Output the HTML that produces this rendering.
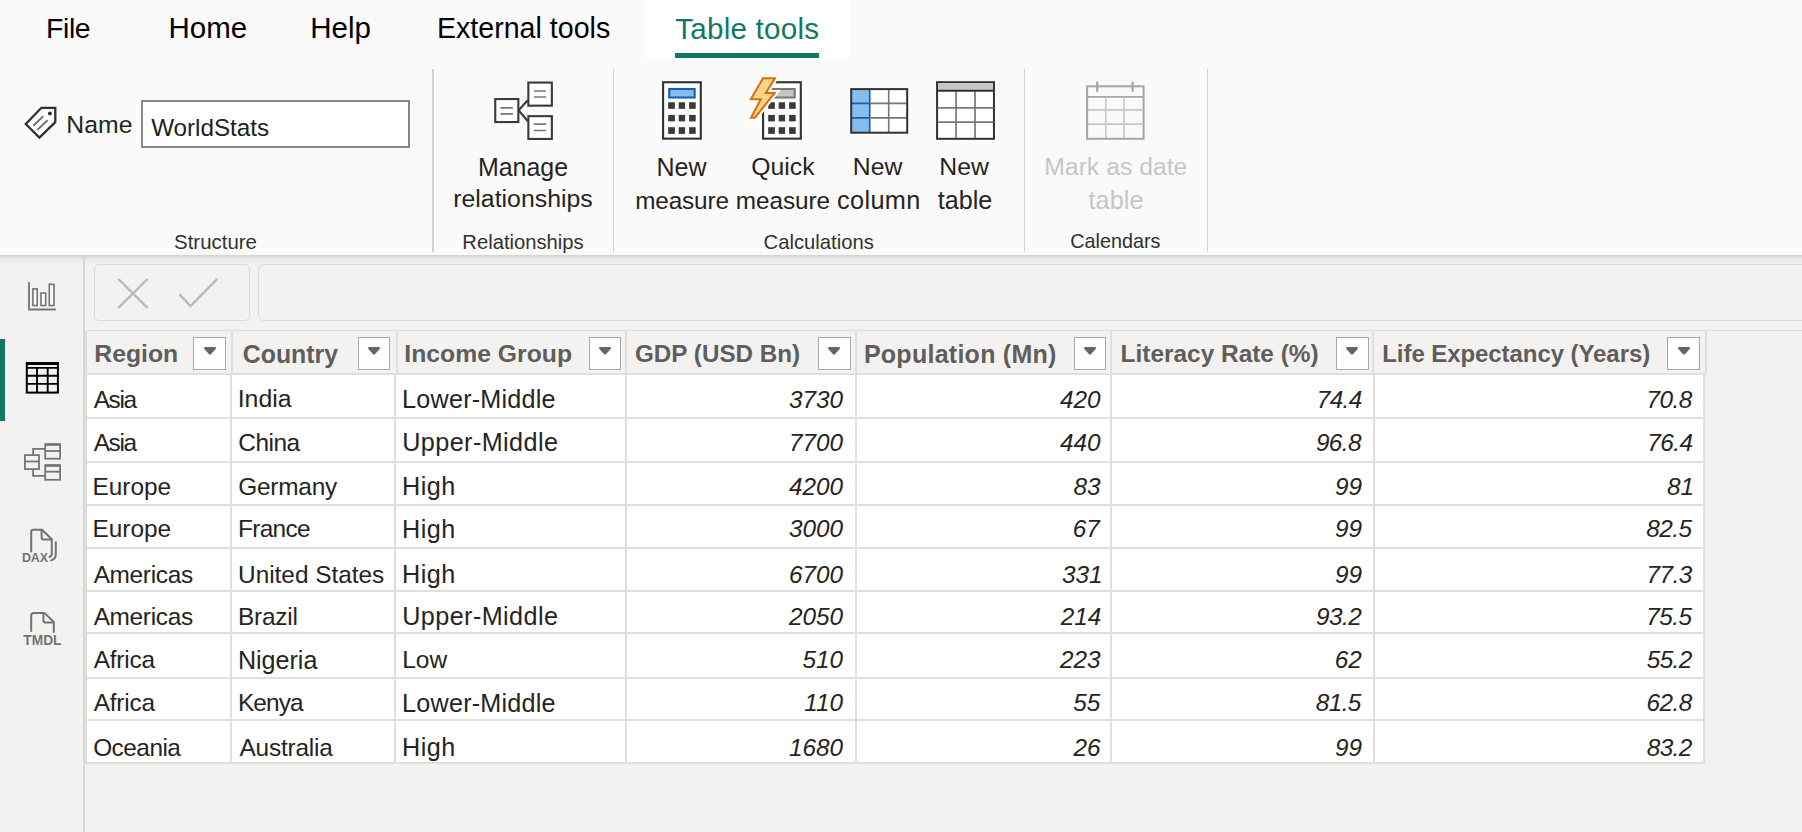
<!DOCTYPE html>
<html><head><meta charset="utf-8"><style>
html,body{margin:0;padding:0;}
body{width:1802px;height:832px;overflow:hidden;background:#f3f2f1;position:relative;font-family:"Liberation Sans",sans-serif;}
.t{position:absolute;white-space:nowrap;line-height:1;}
.r{position:absolute;}
svg.r{overflow:visible}
</style></head><body>
<div class="r" style="left:0px;top:0px;width:1802px;height:255px;background:#fafafa"></div>
<div class="r" style="left:0px;top:255px;width:1802px;height:9px;background:linear-gradient(#d3d2d0,#e9e8e6 40%,#f3f2f1)"></div>
<div class="r" style="left:645px;top:0px;width:204px;height:57.5px;background:#ffffff"></div>
<div class="r" style="left:675px;top:53px;width:144px;height:4.5px;background:#117865"></div>
<div class="t" style="left:46.06px;top:14.26px;font-size:28.4px;color:#000000;letter-spacing:-0.39px">File</div>
<div class="t" style="left:168.57px;top:13.33px;font-size:29.5px;color:#000000;letter-spacing:-0.00px">Home</div>
<div class="t" style="left:310.27px;top:13.33px;font-size:29.5px;color:#000000;letter-spacing:-0.00px">Help</div>
<div class="t" style="left:436.94px;top:14.28px;font-size:28.61px;color:#000000;letter-spacing:-0.00px">External tools</div>
<div class="t" style="left:675.33px;top:13.64px;font-size:29.6px;color:#117865;letter-spacing:0.22px">Table tools</div>
<div class="r" style="left:432.25px;top:69px;width:1.5px;height:182.5px;background:#d6d4d2"></div>
<div class="r" style="left:612.85px;top:69px;width:1.5px;height:182.5px;background:#d6d4d2"></div>
<div class="r" style="left:1023.95px;top:69px;width:1.5px;height:182.5px;background:#d6d4d2"></div>
<div class="r" style="left:1206.65px;top:69px;width:1.5px;height:182.5px;background:#d6d4d2"></div>
<div class="r" style="left:141.3px;top:99.5px;width:268.7px;height:48.80000000000001px;background:#fff;border:2px solid #8a8886;box-sizing:border-box"></div>
<div class="t" style="left:66.36px;top:113.22px;font-size:24.78px;color:#252423;letter-spacing:-0.00px">Name</div>
<div class="t" style="left:151.18px;top:116.13px;font-size:24.3px;color:#201f1e;letter-spacing:-0.05px">WorldStats</div>
<div class="t" style="left:477.94px;top:155.38px;font-size:24.95px;color:#252423;letter-spacing:-0.00px">Manage</div>
<div class="t" style="left:453.29px;top:187.27px;font-size:24.84px;color:#252423;letter-spacing:0.00px">relationships</div>
<div class="t" style="left:656.44px;top:155.04px;font-size:25.0px;color:#252423">New</div>
<div class="t" style="left:635.26px;top:188.73px;font-size:24.3px;color:#252423;letter-spacing:-0.14px">measure</div>
<div class="t" style="left:751.33px;top:155.27px;font-size:24.73px;color:#252423;letter-spacing:-0.00px">Quick</div>
<div class="t" style="left:735.86px;top:188.73px;font-size:24.3px;color:#252423;letter-spacing:-0.08px">measure</div>
<div class="t" style="left:852.75px;top:155.22px;font-size:24.79px;color:#252423;letter-spacing:0.00px">New</div>
<div class="t" style="left:837.12px;top:187.88px;font-size:25.3px;color:#252423;letter-spacing:0.33px">column</div>
<div class="t" style="left:939.35px;top:155.22px;font-size:24.79px;color:#252423;letter-spacing:0.00px">New</div>
<div class="t" style="left:937.82px;top:188.04px;font-size:25.12px;color:#252423;letter-spacing:-0.00px">table</div>
<div class="t" style="left:1044.26px;top:155.24px;font-size:24.76px;color:#c8c6c4;letter-spacing:-0.00px">Mark as date</div>
<div class="t" style="left:1088.52px;top:187.88px;font-size:25.3px;color:#c8c6c4;letter-spacing:0.05px">table</div>
<div class="t" style="left:174.08px;top:231.61px;font-size:20.42px;color:#323130;letter-spacing:-0.00px">Structure</div>
<div class="t" style="left:462.33px;top:231.58px;font-size:20.22px;color:#323130;letter-spacing:0.00px">Relationships</div>
<div class="t" style="left:763.59px;top:231.86px;font-size:20.25px;color:#323130;letter-spacing:0.00px">Calculations</div>
<div class="t" style="left:1070.31px;top:232.05px;font-size:19.79px;color:#323130;letter-spacing:-0.00px">Calendars</div>
<div class="r" style="left:83.3px;top:255px;width:1.6000000000000085px;height:577px;background:#dad8d6"></div>
<div class="r" style="left:0px;top:338.5px;width:5px;height:82.5px;background:#117865"></div>
<div class="r" style="left:93.6px;top:264.4px;width:156.8px;height:57.0px;border:1.8px solid #dddbd9;border-radius:5px;box-sizing:border-box"></div>
<div class="r" style="left:258px;top:264.4px;width:1572px;height:57.0px;border:1.8px solid #dddbd9;border-radius:5px;box-sizing:border-box"></div>
<div class="r" style="left:85px;top:329.8px;width:1717px;height:1.5px;background:#e1dfdd"></div>
<div class="r" style="left:86px;top:375px;width:1618px;height:388px;background:#ffffff"></div>
<div class="r" style="left:85px;top:331px;width:2px;height:43px;background:#e1dfdd"></div>
<div class="r" style="left:230.5px;top:331px;width:2.0px;height:43px;background:#e1dfdd"></div>
<div class="r" style="left:395.5px;top:331px;width:2.0px;height:43px;background:#e1dfdd"></div>
<div class="r" style="left:624.5px;top:331px;width:2.0px;height:43px;background:#e1dfdd"></div>
<div class="r" style="left:854.5px;top:331px;width:2.0px;height:43px;background:#e1dfdd"></div>
<div class="r" style="left:1109.7px;top:331px;width:2.0px;height:43px;background:#e1dfdd"></div>
<div class="r" style="left:1372px;top:331px;width:2px;height:43px;background:#e1dfdd"></div>
<div class="r" style="left:1704.5px;top:331px;width:2.0px;height:43px;background:#e1dfdd"></div>
<div class="r" style="left:85px;top:374px;width:2px;height:390px;background:#e1dfdd"></div>
<div class="r" style="left:230px;top:374px;width:2px;height:390px;background:#e1dfdd"></div>
<div class="r" style="left:394px;top:374px;width:2px;height:390px;background:#e1dfdd"></div>
<div class="r" style="left:625px;top:374px;width:2px;height:390px;background:#e1dfdd"></div>
<div class="r" style="left:855px;top:374px;width:2px;height:390px;background:#e1dfdd"></div>
<div class="r" style="left:1110.4px;top:374px;width:2.0px;height:390px;background:#e1dfdd"></div>
<div class="r" style="left:1372.5px;top:374px;width:2.0px;height:390px;background:#e1dfdd"></div>
<div class="r" style="left:1703px;top:374px;width:2px;height:390px;background:#e1dfdd"></div>
<div class="r" style="left:86px;top:373px;width:1619.5px;height:2px;background:#e1dfdd"></div>
<div class="r" style="left:86px;top:417.1px;width:1618px;height:2.0px;background:#e1dfdd"></div>
<div class="r" style="left:86px;top:460.9px;width:1618px;height:2.0px;background:#e1dfdd"></div>
<div class="r" style="left:86px;top:504.2px;width:1618px;height:2.0px;background:#e1dfdd"></div>
<div class="r" style="left:86px;top:547.3px;width:1618px;height:2.0px;background:#e1dfdd"></div>
<div class="r" style="left:86px;top:590.1px;width:1618px;height:2.0px;background:#e1dfdd"></div>
<div class="r" style="left:86px;top:632.4px;width:1618px;height:2.0px;background:#e1dfdd"></div>
<div class="r" style="left:86px;top:676.5px;width:1618px;height:2.0px;background:#e1dfdd"></div>
<div class="r" style="left:86px;top:719.1px;width:1618px;height:2.0px;background:#e1dfdd"></div>
<div class="r" style="left:86px;top:762px;width:1618px;height:2px;background:#e1dfdd"></div>
<div class="r" style="left:193px;top:337.1px;width:33px;height:32.599999999999966px;background:#fff;border:1.9px solid #a8a8a8;box-sizing:border-box"></div>
<svg class="r" style="left:202.5px;top:346px" width="14" height="10" viewBox="0 0 14 10"><path d="M2.3 2.2 L11.7 2.2 L7 7.3 Z" fill="#666666" stroke="#666666" stroke-width="2.6" stroke-linejoin="round"/></svg>
<div class="r" style="left:358px;top:337.1px;width:32px;height:32.599999999999966px;background:#fff;border:1.9px solid #a8a8a8;box-sizing:border-box"></div>
<svg class="r" style="left:367.0px;top:346px" width="14" height="10" viewBox="0 0 14 10"><path d="M2.3 2.2 L11.7 2.2 L7 7.3 Z" fill="#666666" stroke="#666666" stroke-width="2.6" stroke-linejoin="round"/></svg>
<div class="r" style="left:589px;top:337.1px;width:32px;height:32.599999999999966px;background:#fff;border:1.9px solid #a8a8a8;box-sizing:border-box"></div>
<svg class="r" style="left:598.0px;top:346px" width="14" height="10" viewBox="0 0 14 10"><path d="M2.3 2.2 L11.7 2.2 L7 7.3 Z" fill="#666666" stroke="#666666" stroke-width="2.6" stroke-linejoin="round"/></svg>
<div class="r" style="left:818px;top:337.1px;width:32.5px;height:32.599999999999966px;background:#fff;border:1.9px solid #a8a8a8;box-sizing:border-box"></div>
<svg class="r" style="left:827.25px;top:346px" width="14" height="10" viewBox="0 0 14 10"><path d="M2.3 2.2 L11.7 2.2 L7 7.3 Z" fill="#666666" stroke="#666666" stroke-width="2.6" stroke-linejoin="round"/></svg>
<div class="r" style="left:1074px;top:337.1px;width:32px;height:32.599999999999966px;background:#fff;border:1.9px solid #a8a8a8;box-sizing:border-box"></div>
<svg class="r" style="left:1083.0px;top:346px" width="14" height="10" viewBox="0 0 14 10"><path d="M2.3 2.2 L11.7 2.2 L7 7.3 Z" fill="#666666" stroke="#666666" stroke-width="2.6" stroke-linejoin="round"/></svg>
<div class="r" style="left:1336px;top:337.1px;width:32.5px;height:32.599999999999966px;background:#fff;border:1.9px solid #a8a8a8;box-sizing:border-box"></div>
<svg class="r" style="left:1345.25px;top:346px" width="14" height="10" viewBox="0 0 14 10"><path d="M2.3 2.2 L11.7 2.2 L7 7.3 Z" fill="#666666" stroke="#666666" stroke-width="2.6" stroke-linejoin="round"/></svg>
<div class="r" style="left:1667px;top:337.1px;width:33px;height:32.599999999999966px;background:#fff;border:1.9px solid #a8a8a8;box-sizing:border-box"></div>
<svg class="r" style="left:1676.5px;top:346px" width="14" height="10" viewBox="0 0 14 10"><path d="M2.3 2.2 L11.7 2.2 L7 7.3 Z" fill="#666666" stroke="#666666" stroke-width="2.6" stroke-linejoin="round"/></svg>
<div class="t" style="left:94.33px;top:341.87px;font-size:24.72px;color:#605e5c;letter-spacing:0.00px;font-weight:700">Region</div>
<div class="t" style="left:242.81px;top:341.75px;font-size:24.87px;color:#605e5c;letter-spacing:0.00px;font-weight:700">Country</div>
<div class="t" style="left:404.33px;top:341.86px;font-size:24.74px;color:#605e5c;letter-spacing:-0.00px;font-weight:700">Income Group</div>
<div class="t" style="left:635.03px;top:342.28px;font-size:24.24px;color:#605e5c;letter-spacing:-0.00px;font-weight:700">GDP (USD Bn)</div>
<div class="t" style="left:863.91px;top:341.64px;font-size:25.0px;color:#605e5c;letter-spacing:0.26px;font-weight:700">Population (Mn)</div>
<div class="t" style="left:1120.55px;top:342.12px;font-size:24.43px;color:#605e5c;letter-spacing:-0.00px;font-weight:700">Literacy Rate (%)</div>
<div class="t" style="left:1382.28px;top:342.48px;font-size:24.0px;color:#605e5c;letter-spacing:-0.07px;font-weight:700">Life Expectancy (Years)</div>
<div class="t" style="left:93.64px;top:387.65px;font-size:24.4px;color:#252423;letter-spacing:-1.32px">Asia</div>
<div class="t" style="left:237.70px;top:387.27px;font-size:24.84px;color:#252423;letter-spacing:-0.00px">India</div>
<div class="t" style="left:402.12px;top:386.97px;font-size:25.2px;color:#252423;letter-spacing:0.21px">Lower-Middle</div>
<div class="t" style="left:788.98px;top:387.73px;font-size:24.3px;color:#252423;font-style:italic">3730</div>
<div class="t" style="left:1060.06px;top:387.73px;font-size:24.3px;color:#252423;font-style:italic">420</div>
<div class="t" style="left:1316.70px;top:387.73px;font-size:24.3px;color:#252423;letter-spacing:-0.55px;font-style:italic">74.4</div>
<div class="t" style="left:1646.51px;top:387.73px;font-size:24.3px;color:#252423;letter-spacing:-0.55px;font-style:italic">70.8</div>
<div class="t" style="left:93.64px;top:430.65px;font-size:24.4px;color:#252423;letter-spacing:-1.32px">Asia</div>
<div class="t" style="left:238.28px;top:430.65px;font-size:24.4px;color:#252423;letter-spacing:-0.47px">China</div>
<div class="t" style="left:402.25px;top:429.97px;font-size:25.2px;color:#252423;letter-spacing:0.41px">Upper-Middle</div>
<div class="t" style="left:788.98px;top:430.73px;font-size:24.3px;color:#252423;font-style:italic">7700</div>
<div class="t" style="left:1060.06px;top:430.73px;font-size:24.3px;color:#252423;font-style:italic">440</div>
<div class="t" style="left:1315.91px;top:430.73px;font-size:24.3px;color:#252423;letter-spacing:-0.55px;font-style:italic">96.8</div>
<div class="t" style="left:1647.30px;top:430.73px;font-size:24.3px;color:#252423;letter-spacing:-0.55px;font-style:italic">76.4</div>
<div class="t" style="left:92.59px;top:474.55px;font-size:24.4px;color:#252423;letter-spacing:-0.04px">Europe</div>
<div class="t" style="left:238.28px;top:474.55px;font-size:24.4px;color:#252423;letter-spacing:-0.23px">Germany</div>
<div class="t" style="left:402.12px;top:473.87px;font-size:25.2px;color:#252423;letter-spacing:0.49px">High</div>
<div class="t" style="left:788.98px;top:474.63px;font-size:24.3px;color:#252423;font-style:italic">4200</div>
<div class="t" style="left:1073.61px;top:474.63px;font-size:24.3px;color:#252423;font-style:italic">83</div>
<div class="t" style="left:1334.91px;top:474.63px;font-size:24.3px;color:#252423;font-style:italic">99</div>
<div class="t" style="left:1667.03px;top:474.63px;font-size:24.3px;color:#252423;font-style:italic">81</div>
<div class="t" style="left:92.59px;top:517.35px;font-size:24.4px;color:#252423;letter-spacing:-0.04px">Europe</div>
<div class="t" style="left:237.99px;top:517.35px;font-size:24.4px;color:#252423;letter-spacing:-0.65px">France</div>
<div class="t" style="left:402.12px;top:516.67px;font-size:25.2px;color:#252423;letter-spacing:0.49px">High</div>
<div class="t" style="left:788.98px;top:517.43px;font-size:24.3px;color:#252423;font-style:italic">3000</div>
<div class="t" style="left:1072.64px;top:517.43px;font-size:24.3px;color:#252423;font-style:italic">67</div>
<div class="t" style="left:1334.91px;top:517.43px;font-size:24.3px;color:#252423;font-style:italic">99</div>
<div class="t" style="left:1646.33px;top:517.43px;font-size:24.3px;color:#252423;letter-spacing:-0.55px;font-style:italic">82.5</div>
<div class="t" style="left:93.64px;top:562.65px;font-size:24.4px;color:#252423;letter-spacing:-0.31px">Americas</div>
<div class="t" style="left:238.11px;top:562.65px;font-size:24.4px;color:#252423;letter-spacing:-0.03px">United States</div>
<div class="t" style="left:402.12px;top:561.97px;font-size:25.2px;color:#252423;letter-spacing:0.49px">High</div>
<div class="t" style="left:788.98px;top:562.73px;font-size:24.3px;color:#252423;font-style:italic">6700</div>
<div class="t" style="left:1061.88px;top:562.73px;font-size:24.3px;color:#252423;font-style:italic">331</div>
<div class="t" style="left:1334.91px;top:562.73px;font-size:24.3px;color:#252423;font-style:italic">99</div>
<div class="t" style="left:1646.57px;top:562.73px;font-size:24.3px;color:#252423;letter-spacing:-0.55px;font-style:italic">77.3</div>
<div class="t" style="left:93.64px;top:605.15px;font-size:24.4px;color:#252423;letter-spacing:-0.31px">Americas</div>
<div class="t" style="left:237.99px;top:605.15px;font-size:24.4px;color:#252423;letter-spacing:-0.23px">Brazil</div>
<div class="t" style="left:402.25px;top:604.47px;font-size:25.2px;color:#252423;letter-spacing:0.41px">Upper-Middle</div>
<div class="t" style="left:788.98px;top:605.23px;font-size:24.3px;color:#252423;font-style:italic">2050</div>
<div class="t" style="left:1060.79px;top:605.23px;font-size:24.3px;color:#252423;font-style:italic">214</div>
<div class="t" style="left:1316.09px;top:605.23px;font-size:24.3px;color:#252423;letter-spacing:-0.55px;font-style:italic">93.2</div>
<div class="t" style="left:1646.33px;top:605.23px;font-size:24.3px;color:#252423;letter-spacing:-0.55px;font-style:italic">75.5</div>
<div class="t" style="left:93.64px;top:648.35px;font-size:24.4px;color:#252423;letter-spacing:-0.17px">Africa</div>
<div class="t" style="left:237.93px;top:647.78px;font-size:25.07px;color:#252423;letter-spacing:-0.00px">Nigeria</div>
<div class="t" style="left:402.18px;top:648.26px;font-size:24.5px;color:#252423;letter-spacing:0.00px">Low</div>
<div class="t" style="left:802.46px;top:648.43px;font-size:24.3px;color:#252423;font-style:italic">510</div>
<div class="t" style="left:1060.06px;top:648.43px;font-size:24.3px;color:#252423;font-style:italic">223</div>
<div class="t" style="left:1334.73px;top:648.43px;font-size:24.3px;color:#252423;font-style:italic">62</div>
<div class="t" style="left:1646.69px;top:648.43px;font-size:24.3px;color:#252423;letter-spacing:-0.55px;font-style:italic">55.2</div>
<div class="t" style="left:93.64px;top:691.35px;font-size:24.4px;color:#252423;letter-spacing:-0.17px">Africa</div>
<div class="t" style="left:237.99px;top:691.35px;font-size:24.4px;color:#252423;letter-spacing:-0.91px">Kenya</div>
<div class="t" style="left:402.12px;top:690.67px;font-size:25.2px;color:#252423;letter-spacing:0.21px">Lower-Middle</div>
<div class="t" style="left:804.28px;top:691.43px;font-size:24.3px;color:#252423;font-style:italic">110</div>
<div class="t" style="left:1073.37px;top:691.43px;font-size:24.3px;color:#252423;font-style:italic">55</div>
<div class="t" style="left:1315.73px;top:691.43px;font-size:24.3px;color:#252423;letter-spacing:-0.55px;font-style:italic">81.5</div>
<div class="t" style="left:1646.51px;top:691.43px;font-size:24.3px;color:#252423;letter-spacing:-0.55px;font-style:italic">62.8</div>
<div class="t" style="left:93.14px;top:736.05px;font-size:24.4px;color:#252423;letter-spacing:-0.51px">Oceania</div>
<div class="t" style="left:239.44px;top:736.05px;font-size:24.4px;color:#252423;letter-spacing:-0.19px">Australia</div>
<div class="t" style="left:402.12px;top:735.37px;font-size:25.2px;color:#252423;letter-spacing:0.49px">High</div>
<div class="t" style="left:788.98px;top:736.13px;font-size:24.3px;color:#252423;font-style:italic">1680</div>
<div class="t" style="left:1073.43px;top:736.13px;font-size:24.3px;color:#252423;font-style:italic">26</div>
<div class="t" style="left:1334.91px;top:736.13px;font-size:24.3px;color:#252423;font-style:italic">99</div>
<div class="t" style="left:1646.69px;top:736.13px;font-size:24.3px;color:#252423;letter-spacing:-0.55px;font-style:italic">83.2</div>
<svg style="position:absolute;left:0;top:0;overflow:visible" width="1802" height="832" viewBox="0 0 1802 832">
<!-- tag icon -->
<path d="M41.45 107.8 L55.3 107.8 L55.3 122.2 L39.4 137.6 L25.8 124 Z" fill="#ffffff" stroke="#323130" stroke-width="2.3" stroke-linejoin="miter"/>
<circle cx="49.9" cy="113.6" r="2" fill="#323130"/>
<path d="M33.4 125.7 L43.3 116.1 M37.4 129.9 L47.5 120.2" stroke="#6b6a69" stroke-width="1.9"/>

<!-- manage relationships -->
<g fill="#ffffff" stroke="#3b3a39" stroke-width="2.1">
<rect x="495.25" y="99.05" width="23.1" height="23"/>
<rect x="528.35" y="82.55" width="23.5" height="23.1"/>
<rect x="528.35" y="116.15" width="23.5" height="22.8"/>
<path d="M518.6 110.3 L527.8 100.2 M518.6 110.3 L527.8 121.2" fill="none"/>
</g>
<path d="M500.5 107.8 H512.9 M500.5 113.9 H512.9 M533.9 91 H546 M533.9 97 H546 M533.9 124.1 H546 M533.9 130.5 H546" stroke="#7a7574" stroke-width="1.7"/>

<!-- new measure calculator -->
<g id="calc">
<rect x="663.1" y="82.25" width="37.7" height="56.4" fill="#ffffff" stroke="#323130" stroke-width="2.1"/>
<rect x="669.25" y="89" width="25.4" height="8.5" fill="#86bdee" stroke="#0f62b8" stroke-width="2.1"/>
<g fill="#3b3a39">
<rect x="668.2" y="102.25" width="6.7" height="6.6"/><rect x="678.7" y="102.25" width="6.4" height="6.6"/><rect x="689.1" y="102.25" width="6.6" height="6.6"/>
<rect x="668.2" y="114.9" width="6.7" height="6.5"/><rect x="678.7" y="114.9" width="6.4" height="6.5"/><rect x="689.1" y="114.9" width="6.6" height="6.5"/>
<rect x="668.2" y="127.2" width="6.7" height="6.7"/><rect x="678.7" y="127.2" width="6.4" height="6.7"/><rect x="689.1" y="127.2" width="6.6" height="6.7"/>
</g>
</g>

<!-- quick measure -->
<g transform="translate(100,0)">
<rect x="663.1" y="82.25" width="37.7" height="56.4" fill="#ffffff" stroke="#323130" stroke-width="2.1"/>
<rect x="669.25" y="89" width="25.4" height="8.5" fill="#c8c6c4" stroke="#797775" stroke-width="2.1"/>
<g fill="#3b3a39">
<rect x="668.2" y="102.25" width="6.7" height="6.6"/><rect x="678.7" y="102.25" width="6.4" height="6.6"/><rect x="689.1" y="102.25" width="6.6" height="6.6"/>
<rect x="668.2" y="114.9" width="6.7" height="6.5"/><rect x="678.7" y="114.9" width="6.4" height="6.5"/><rect x="689.1" y="114.9" width="6.6" height="6.5"/>
<rect x="668.2" y="127.2" width="6.7" height="6.7"/><rect x="678.7" y="127.2" width="6.4" height="6.7"/><rect x="689.1" y="127.2" width="6.6" height="6.7"/>
</g>
</g>
<path d="M763 78.2 L775 78.2 L765.8 93 L774.6 93 L755 117.7 L751 117.7 L760.8 99.2 L750.8 99.2 Z" fill="#ffffff" stroke="#ffffff" stroke-width="6" stroke-linejoin="miter" stroke-miterlimit="3"/>
<path d="M763 78.2 L775 78.2 L765.8 93 L774.6 93 L755 117.7 L751 117.7 L760.8 99.2 L750.8 99.2 Z" fill="#f6d48a" stroke="#d86d0a" stroke-width="2" stroke-linejoin="miter" stroke-miterlimit="3"/>

<!-- new column -->
<rect x="851.2" y="89.1" width="56" height="43.6" fill="#ffffff"/>
<rect x="851.2" y="89.1" width="18.5" height="43.6" fill="#86bdec"/>
<path d="M869.7 89 V132.8 M851 103.4 H869.7 M851 117.9 H869.7" stroke="#0f62b8" stroke-width="1.7"/>
<path d="M869.7 103.4 H907 M869.7 117.9 H907 M888.7 89 V132.8" stroke="#7a7574" stroke-width="1.6"/>
<rect x="851.2" y="89.1" width="56" height="43.6" fill="none" stroke="#323130" stroke-width="2"/>

<!-- new table -->
<rect x="937.06" y="82.2" width="56.9" height="56.6" fill="#ffffff" stroke="#323130" stroke-width="2"/>
<rect x="938" y="83.2" width="55" height="7" fill="#c8c6c4"/>
<path d="M956.1 90.8 V138 M975 90.8 V138 M937.5 107.8 H993.5 M937.5 122.1 H993.5" stroke="#797775" stroke-width="1.7"/>
<path d="M937 90.8 H994" stroke="#323130" stroke-width="2"/>

<!-- calendar -->
<rect x="1087.1" y="86.3" width="56.5" height="52.5" fill="#fafafa" stroke="#a8a6a4" stroke-width="2"/>
<path d="M1087 96.9 H1143.6" stroke="#a8a6a4" stroke-width="1.8"/>
<path d="M1105.8 97 V138 M1123.9 97 V138 M1088 109.9 H1142.6 M1088 124.1 H1142.6" stroke="#c8c6c4" stroke-width="1.6"/>
<path d="M1097.2 81.5 V91.7 M1132.6 81.5 V91.7" stroke="#a8a6a4" stroke-width="2.2"/>

<!-- formula bar icons -->
<path d="M118.9 279.5 L147 307.3 M147 279.5 L118.9 307.3" stroke="#bababa" stroke-width="2.4" stroke-linecap="round"/>
<path d="M179.9 294.8 L190.5 306 L216.5 279.6" fill="none" stroke="#bababa" stroke-width="2.4" stroke-linecap="round" stroke-linejoin="miter"/>

<!-- sidebar: report -->
<g stroke="#737373" fill="none">
<path d="M29 282.3 V309.5 H55.8" stroke-width="1.8"/>
<rect x="32.9" y="288.9" width="4.3" height="16.6" stroke-width="1.6" fill="#fafafa"/>
<rect x="41" y="293" width="4.7" height="12.5" stroke-width="1.6" fill="#fafafa"/>
<rect x="49.3" y="284.3" width="4.7" height="21.2" stroke-width="1.6" fill="#fafafa"/>
</g>
<!-- sidebar: data view table -->
<g fill="none" stroke="#000000">
<rect x="26.8" y="363.1" width="31.1" height="29.5" stroke-width="2"/>
<path d="M26 363.6 H58.9" stroke-width="3"/>
<path d="M26 367.9 H58.9 M26 375.8 H58.9 M26 383.9 H58.9 M37 367 V393 M47.7 367 V393" stroke-width="1.9"/>
</g>
<!-- sidebar: model -->
<g fill="none" stroke="#737373" stroke-width="1.75">
<rect x="24.9" y="455.1" width="14.1" height="14" fill="#f3f2f1"/>
<path d="M24.9 461.5 H39"/>
<rect x="45.2" y="444.2" width="14.9" height="14.5"/>
<path d="M45.2 444.6 H60.1" stroke-width="2.4"/>
<path d="M45.2 451 H60.1"/>
<rect x="45.2" y="465.2" width="14.9" height="14.6"/>
<path d="M45.2 465.6 H60.1" stroke-width="2.4"/>
<path d="M45.2 471.7 H60.1"/>
<path d="M33.1 455 V448.9 H45 M33.1 469.2 V475.9 H45"/>
</g>
<!-- DAX -->
<g fill="none" stroke="#737373" stroke-width="2" stroke-linecap="round" stroke-linejoin="round">
<path d="M31.2 551.5 V532 Q31.2 529.8 33.4 529.8 H42 L51.8 539.2 V553.5 Q51.8 556.5 49.4 557"/>
<path d="M41.6 530 V537.5 Q41.6 539.6 43.6 539.6 H51.6"/>
<path d="M55.8 542.3 V554 Q55.8 559 51.2 560.4"/>
</g>
<text x="21.9" y="561.6" font-family="Liberation Sans" font-weight="700" font-size="13.6" fill="#737373" textLength="26.2" lengthAdjust="spacingAndGlyphs">DAX</text>
<!-- TMDL -->
<g fill="none" stroke="#737373" stroke-width="2" stroke-linecap="round" stroke-linejoin="round">
<path d="M31.2 631 V615.5 Q31.2 612.9 33.8 612.9 H44.3 L53.8 622 V632"/>
<path d="M43.4 613 V620.3 Q43.4 622.5 45.6 622.5 H53.6"/>
</g>
<text x="23.3" y="644.8" font-family="Liberation Sans" font-weight="700" font-size="15.2" fill="#737373" textLength="38.2" lengthAdjust="spacingAndGlyphs">TMDL</text>
</svg>

</body></html>
